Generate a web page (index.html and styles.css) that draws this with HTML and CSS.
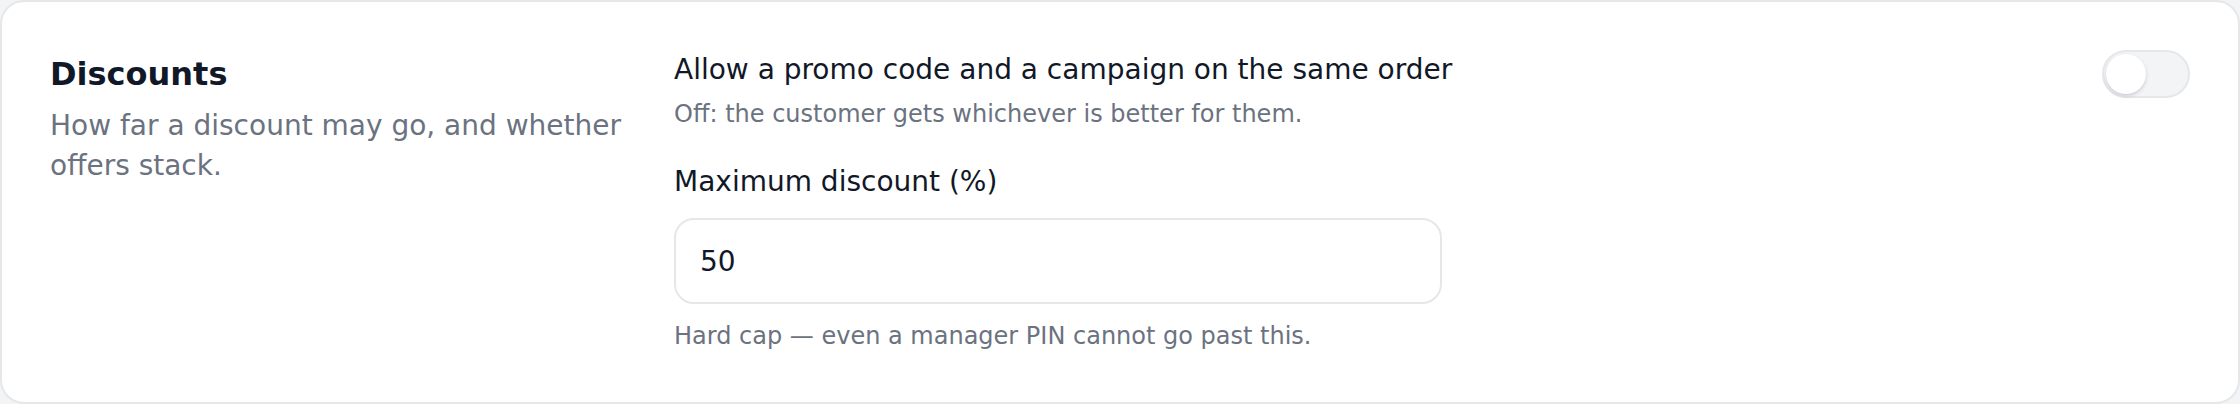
FILE: index.html
```html
<!DOCTYPE html>
<html lang="en">
<head>
<meta charset="utf-8">
<title>Discounts</title>
<link rel="stylesheet" href="styles.css">
</head>
<body>
<section class="card">
  <div class="intro">
    <h2 class="title">Discounts</h2>
    <p class="desc">How far a discount may go, and whether offers stack.</p>
  </div>
  <div class="fields">
    <div class="toggle-row">
      <div class="toggle-text">
        <div class="label">Allow a promo code and a campaign on the same order</div>
        <div class="hint hint-tight">Off: the customer gets whichever is better for them.</div>
      </div>
      <button class="switch" type="button" role="switch" aria-checked="false"><span class="knob"></span></button>
    </div>
    <div class="field">
      <label class="label" for="maxdisc">Maximum discount (%)</label>
      <input class="input" id="maxdisc" type="text" value="50">
      <div class="hint hint-below">Hard cap — even a manager PIN cannot go past this.</div>
    </div>
  </div>
</section>
</body>
</html>
```

FILE: styles.css
```css
* { box-sizing: border-box; }

html, body {
  margin: 0;
  padding: 0;
  background: #f3f4f6;
}

body {
  font-family: "DejaVu Sans", "Liberation Sans", sans-serif;
  color: #111827;
}

.card {
  display: flex;
  gap: 48px;
  background: #ffffff;
  border: 2px solid #e5e7eb;
  border-radius: 24px;
  padding: 48px;
  min-height: 404px;
}

.intro {
  flex: 0 0 576px;
  width: 576px;
}

.title {
  margin: 0;
  font-size: 32px;
  line-height: 48px;
  font-weight: 700;
  color: #111827;
}

.desc {
  margin: 8px 0 0;
  font-size: 28px;
  line-height: 40px;
  color: #6b7280;
}

.fields {
  flex: 1 1 auto;
  display: flex;
  flex-direction: column;
  gap: 32px;
}

.toggle-row {
  display: flex;
  justify-content: space-between;
  align-items: flex-start;
  gap: 32px;
}

.label {
  display: block;
  font-size: 28px;
  line-height: 40px;
  color: #111827;
}

.hint {
  font-size: 24px;
  line-height: 32px;
  color: #6b7280;
}

.hint-tight { margin-top: 8px; }
.hint-below { margin-top: 16px; }

.switch {
  flex: 0 0 auto;
  display: flex;
  align-items: center;
  width: 88px;
  height: 48px;
  padding: 2px;
  margin: 0;
  border: 2px solid #e5e7eb;
  border-radius: 999px;
  background: #f3f4f6;
  cursor: pointer;
}

.knob {
  display: block;
  width: 40px;
  height: 40px;
  border-radius: 50%;
  background: #ffffff;
  box-shadow: 0 2px 4px rgba(17, 24, 39, 0.12), 0 1px 2px rgba(17, 24, 39, 0.08);
}

.input {
  display: block;
  width: 768px;
  height: 86px;
  margin-top: 16px;
  padding: 0 24px;
  border: 2px solid #e5e7eb;
  border-radius: 20px;
  background: #ffffff;
  font-family: "DejaVu Sans", "Liberation Sans", sans-serif;
  font-size: 28px;
  line-height: 40px;
  color: #111827;
  outline: none;
}
```
